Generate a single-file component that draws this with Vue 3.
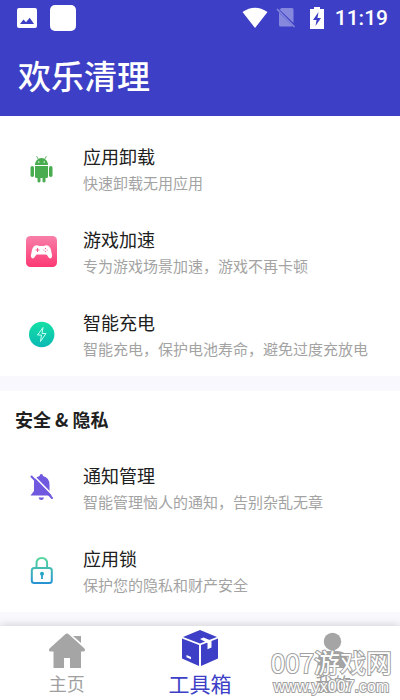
<script setup>
const tools = [
  { id: 'uninstall', title: '应用卸载', desc: '快速卸载无用应用' },
  { id: 'game', title: '游戏加速', desc: '专为游戏场景加速，游戏不再卡顿' },
  { id: 'charge', title: '智能充电', desc: '智能充电，保护电池寿命，避免过度充放电' },
]
const privacy = [
  { id: 'notify', title: '通知管理', desc: '智能管理恼人的通知，告别杂乱无章' },
  { id: 'lock', title: '应用锁', desc: '保护您的隐私和财产安全' },
]
const sections = [
  { id: 'tools', heading: '', items: tools },
  { id: 'privacy', heading: '安全 & 隐私', items: privacy },
]
</script>

<template>
  <div class="app">
    <header class="header">
      <div class="status">
        <svg class="status-photo" width="20" height="20" viewBox="0 0 20 20">
          <rect width="20" height="20" rx="2" fill="#fff" />
          <path d="M3 16 6.5 11.5 9 14.3 12.7 9.7 17 16Z" fill="#3d3fc6" />
        </svg>
        <svg class="status-app" width="26" height="26" viewBox="0 0 26 26">
          <rect width="26" height="26" rx="5" fill="#fff" />
        </svg>
        <span class="spacer"></span>
        <svg class="status-wifi" width="26" height="22" viewBox="0 0 26 22">
          <path d="M0.5 5Q13-3.500 25.500 5L13 21Z" fill="#fff" />
        </svg>
        <svg class="status-sim" width="20" height="22" viewBox="0 0 20 22">
          <path d="M5.500 1H16Q17.500 1 17.500 2.500V16L3.500 2.500Z M3 5.500 16.500 19Q16 19.500 15 19.500H4.500Q3 19.500 3 18Z" fill="#8688dd" />
          <path d="M1 2 18.500 20" stroke="#8688dd" stroke-width="1.600" />
        </svg>
        <svg class="status-battery" width="14" height="22" viewBox="0 0 14 22">
          <path d="M4 0H10V2H14V22H0V2H4Z" fill="#fff" />
          <path d="M8.500 5 3 13H6.500L5.500 19 11 11H7.500Z" fill="#3d3fc6" />
        </svg>
        <time class="clock">11:19</time>
      </div>
      <h1 class="title">欢乐清理</h1>
    </header>

    <main class="content">
      <section v-for="s in sections" :key="s.id" class="section">
        <h2 v-if="s.heading" class="heading">{{ s.heading }}</h2>
        <ul class="list">
          <li v-for="item in s.items" :key="item.id">
            <button type="button" class="item">
              <svg v-if="item.id === 'uninstall'" class="icon" width="32" height="32" viewBox="0 0 32 32">
                <g fill="#49ad50">
                  <path d="M9 12C9 8 12 5 15.500 5S22 8 22 12Z" />
                  <path d="M9 13H22V23.500Q22 25 20.500 25H19.500V28.500A1.700 1.700 0 0 1 16.500 28.500V25H14.500V28.500A1.700 1.700 0 0 1 11.500 28.500V25H10.500Q9 25 9 23.500Z" />
                  <rect x="4.500" y="13" width="3.500" height="11" rx="1.700" />
                  <rect x="23" y="13" width="3.500" height="11" rx="1.700" />
                </g>
                <path d="M10.500 3 12.500 6.500M20.500 3 18.500 6.500" stroke="#49ad50" stroke-width="0.800" />
                <circle cx="12.800" cy="9" r="0.700" fill="#fff" />
                <circle cx="18.200" cy="9" r="0.700" fill="#fff" />
              </svg>

              <svg v-else-if="item.id === 'game'" class="icon" width="32" height="32" viewBox="0 0 32 32">
                <defs>
                  <linearGradient id="pink" x1="0" y1="0" x2="0" y2="1">
                    <stop offset="0" stop-color="#f77fa9" />
                    <stop offset="1" stop-color="#fd3974" />
                  </linearGradient>
                </defs>
                <rect x="0" y="0" width="31" height="31" rx="4.500" fill="url(#pink)" />
                <path d="M9.500 9.500Q11.500 8.800 13 10H18Q19.500 8.800 21.500 9.500Q24 10 25 14L26 19Q26.500 22 24.500 22.500Q23 22.500 21 19Q20.500 18.500 19.500 18.500H11.500Q10.500 18.500 10 19Q8 22.500 6.500 22.500Q4.500 22 5 19L6 14Q7 10 9.500 9.500Z" fill="#fff" />
                <path d="M11.500 12V16M9.500 14H13.500" stroke="#f5588a" stroke-width="1" />
                <g fill="#f5588a">
                  <circle cx="19.500" cy="12.400" r="0.600" /><circle cx="19.500" cy="15.600" r="0.600" />
                  <circle cx="17.900" cy="14" r="0.600" /><circle cx="21.100" cy="14" r="0.600" />
                </g>
              </svg>

              <svg v-else-if="item.id === 'charge'" class="icon" width="32" height="32" viewBox="0 0 32 32">
                <defs>
                  <linearGradient id="mint" x1="0" y1="0" x2="0" y2="1">
                    <stop offset="0" stop-color="#13e0a5" />
                    <stop offset="1" stop-color="#0bb9b4" />
                  </linearGradient>
                </defs>
                <circle cx="15.700" cy="15.500" r="12.700" fill="url(#mint)" />
                <path d="M17 8.500 11.500 16H15.500L14.500 22.500 20 14.500H16Z" fill="none" stroke="#c9fff2" stroke-width="1" stroke-linejoin="round" />
              </svg>

              <svg v-else-if="item.id === 'notify'" class="icon" width="32" height="32" viewBox="0 0 32 32">
                <path d="M15.300 2Q17 2 17 4Q23.500 5.500 23.500 13V19L26 23.500H4.500L8 19V11Q8 5.500 13.600 4Q13.600 2 15.300 2Z" fill="#7059df" />
                <path d="M12.500 25.500H18Q17.500 28 15.300 28T12.500 25.500Z" fill="#7059df" />
                <path d="M6.500 2.500 28 24.500" stroke="#fff" stroke-width="1.600" />
                <path d="M5.500 4.500 26 26" stroke="#7059df" stroke-width="2" stroke-linecap="round" />
              </svg>

              <svg v-else class="icon" width="32" height="32" viewBox="0 0 32 32">
                <defs>
                  <linearGradient id="lock" gradientUnits="userSpaceOnUse" x1="0" y1="3" x2="0" y2="29">
                    <stop offset="0" stop-color="#57d79e" />
                    <stop offset="1" stop-color="#2691d5" />
                  </linearGradient>
                </defs>
                <g fill="none" stroke="url(#lock)" stroke-width="2">
                  <rect x="5.800" y="13" width="20" height="15" rx="2.500" />
                  <path d="M10.500 13V8.500Q10.500 3 15.800 3T21.100 8.500V13" />
                </g>
                <circle cx="16" cy="18.700" r="2" fill="#25a9c0" />
                <path d="M16 19V24" stroke="#2a9fca" stroke-width="1.800" />
              </svg>

              <span class="text">
                <span class="name">{{ item.title }}</span>
                <span class="desc">{{ item.desc }}</span>
              </span>
            </button>
          </li>
        </ul>
      </section>
    </main>

    <nav class="nav">
      <a class="tab" href="#home">
        <svg width="40" height="40" viewBox="0 0 40 40">
          <path d="M20 3.500Q21 3.500 22 4.500L37.500 18.500Q39 21.500 36 21.500H34V38H23V28H17V38H6.500V21.500H3.500Q1 21 2.500 18.500L18 4.500Q19 3.500 20 3.500Z" fill="#a5a5a5" />
          <path d="M26 6H34V13Z" fill="#a5a5a5" />
        </svg>
        <span>主页</span>
      </a>
      <a class="tab active" href="#tools" aria-current="page">
        <svg width="40" height="40" viewBox="0 0 40 40">
          <path d="M20 0 37 7 20 13.500 3 7Z" fill="#3d3fc6" />
          <path d="M2 8.500 19 15V36L2 28.500Z" fill="#3d3fc6" />
          <path d="M38 8.500 21 15V36L38 28.500Z" fill="#3d3fc6" />
          <path d="M20 9 23.500 7.500 31.500 10.800V17.500L27.500 19.200V13Z" fill="#fff" />
          <path d="M6.500 25 11 27V29.200L6.500 27.200Z" fill="#fff" />
        </svg>
        <span>工具箱</span>
      </a>
      <a class="tab" href="#mine">
        <svg width="40" height="40" viewBox="0 0 40 40">
          <circle cx="19.500" cy="11.500" r="8.700" fill="#a5a5a5" />
          <path d="M4.500 38V32Q4.500 21 15 21H24Q34.500 21 34.500 32V38Z" fill="#a5a5a5" />
        </svg>
        <span>我的</span>
      </a>
      <div class="watermark">
        <span class="mark-name">007游戏网</span>
        <span class="mark-site">www.yx007.com</span>
      </div>
    </nav>
  </div>
</template>

<style>
body {
  margin: 0;
}
</style>

<style scoped>
.app {
  display: flex;
  flex-direction: column;
  height: 100vh;
  background: #f8f8fd;
  color: #202020;
  font-family: "Noto Sans CJK SC", sans-serif;
}
.header {
  flex: none;
  background: #3d3fc6;
  color: #fff;
}
.status {
  display: flex;
  align-items: center;
  height: 36px;
  padding: 0 12px 0 17px;
}
.status-app {
  margin-left: 13px;
}
.spacer {
  flex: 1;
}
.status-sim {
  margin-left: 8px;
}
.status-battery {
  margin-left: 14px;
}
.clock {
  margin-left: 11px;
  font: 500 21px/36px Roboto, sans-serif;
}
.title {
  margin: 0;
  padding: 0 18px 2px;
  font-size: 33px;
  font-weight: 500;
  line-height: 78px;
}
.content {
  flex: 1;
  min-height: 0;
  overflow: hidden;
}
.section {
  margin-bottom: 15px;
  padding-top: 11px;
  background: #fff;
}
.heading {
  margin: 0;
  padding: 0 15px;
  font-size: 18px;
  font-weight: 700;
  line-height: 34px;
}
.heading + .list {
  padding-top: 10px;
}
.list {
  margin: 0;
  padding: 0;
  list-style: none;
}
.item {
  display: flex;
  align-items: center;
  gap: 25px;
  width: 100%;
  height: 83px;
  margin: 0;
  padding: 0 26px;
  border: 0;
  background: none;
  color: inherit;
  font-family: inherit;
  text-align: left;
}
.icon {
  flex: none;
}
.text {
  display: flex;
  flex-direction: column;
  gap: 3px;
  white-space: nowrap;
}
.name {
  font-size: 18px;
  line-height: 26px;
}
.desc {
  color: #a3a3a3;
  font-size: 15px;
  line-height: 22px;
}
.nav {
  position: relative;
  display: flex;
  flex: none;
  height: 74px;
  background: #fff;
  box-shadow: 0 -1px 8px rgba(0, 0, 0, 0.16);
}
.tab {
  display: flex;
  flex: 1;
  flex-direction: column;
  align-items: center;
  padding-top: 4px;
  color: #a0a0a0;
  font-size: 18px;
  line-height: 26px;
  text-decoration: none;
}
.tab.active {
  color: #3d3fc6;
  font-size: 21px;
}
.watermark {
  position: absolute;
  right: 8px;
  bottom: 4px;
  display: flex;
  flex-direction: column;
  align-items: center;
  color: #fff;
  white-space: nowrap;
  -webkit-text-stroke: 2px #a0a0a0;
  paint-order: stroke fill;
}
.mark-name {
  font-size: 26px;
  line-height: 32px;
}
.mark-site {
  font-family: "Liberation Sans", sans-serif;
  font-size: 16px;
  line-height: 18px;
}
</style>
